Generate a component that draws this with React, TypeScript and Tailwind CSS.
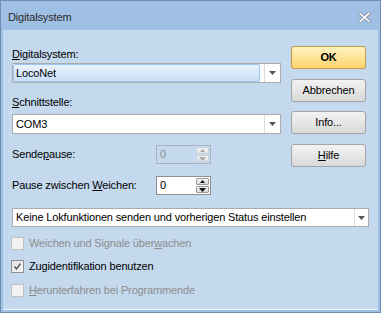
import type { ReactNode } from 'react'

const font = { fontFamily: '"Liberation Sans", Arial, sans-serif' }

function Arrow({ color = '#3c3c3c' }: { color?: string }) {
  return (
    <svg width="7" height="4" viewBox="0 0 7 4">
      <path d="M0 0h7L3.5 4z" fill={color} />
    </svg>
  )
}

function Combo({ value, highlight, w }: { value: string; highlight?: boolean; w: string }) {
  return (
    <div className={`flex h-[20px] ${w} border border-[#ababab] bg-white`}>
      <div className="flex flex-1 p-[0px]">
        {highlight ? (
          <div className="flex flex-1 items-center rounded-[2px] border border-[#9cc6f0] bg-gradient-to-b from-[#eaf3fd] to-[#c8dff9] pl-[2px] text-black">
            {value}
          </div>
        ) : (
          <div className="flex flex-1 items-center pl-[3px] text-black">{value}</div>
        )}
      </div>
      <div className="ml-[4px] w-[1px] bg-[#dcdcdc]" />
      <div className="flex w-[15px] items-center justify-center">
        <Arrow color="#555" />
      </div>
    </div>
  )
}

function Spin({ value, disabled }: { value: string; disabled?: boolean }) {
  const btn = disabled
    ? 'border-[#c9d3de] bg-gradient-to-b from-[#f4f4f4] to-[#e2e2e2]'
    : 'border-[#9a9a9a] bg-gradient-to-b from-[#f6f6f6] to-[#d6d6d6]'
  const arrow = disabled ? '#a8a8a8' : '#111'
  return (
    <div
      className={`flex h-[19px] w-[55px] border ${
        disabled ? 'border-[#aab4c0] bg-transparent text-[#8d8d8d]' : 'border-[#8e8f8f] bg-white text-black'
      }`}
    >
      <div className="flex flex-1 items-center pl-[3px]">{value}</div>
      <div className="flex w-[15px] flex-col gap-[1px] p-[1px]">
        <div className={`flex flex-1 items-center justify-center rounded-[1px] border ${btn}`}>
          <svg width="5" height="3" viewBox="0 0 5 3">
            <path d="M2.5 0L5 3H0z" fill={arrow} />
          </svg>
        </div>
        <div className={`flex flex-1 items-center justify-center rounded-[1px] border ${btn}`}>
          <Arrow color={arrow} />
        </div>
      </div>
    </div>
  )
}

function Button({ children, primary }: { children: ReactNode; primary?: boolean }) {
  return (
    <div
      className={`flex h-[23px] w-[75px] items-center justify-center rounded-[3px] border text-black ${
        primary
          ? 'border-[#c29b4a] bg-gradient-to-b from-[#fff3c0] to-[#fdd56c] font-bold'
          : 'border-[#a3a3a3] bg-gradient-to-b from-[#f3f3f3] to-[#d9d9d9]'
      }`}
    >
      {children}
    </div>
  )
}

function Check({ label, checked, disabled }: { label: ReactNode; checked?: boolean; disabled?: boolean }) {
  return (
    <div className="flex h-[23px] items-center">
      <div
        className={`ml-[-1px] flex h-[13px] w-[13px] items-center justify-center border ${
          disabled ? 'border-[#c3c3c3] bg-[#f1f1f1]' : 'border-[#8f8f8f] bg-gradient-to-br from-[#e4e4e4] to-[#f8f8f8]'
        }`}
      >
        {checked && (
          <svg width="9" height="9" viewBox="0 0 9 9">
            <path d="M1.5 4.5l2 2.5L7.5 1.5" fill="none" stroke="#5a5a5a" strokeWidth="1.5" />
          </svg>
        )}
      </div>
      <span className={`ml-[5px] ${disabled ? 'text-[#8d8d8d]' : 'text-black'}`}>{label}</span>
    </div>
  )
}

export default function App() {
  return (
    <div
      className="flex h-[313px] w-[381px] flex-col border border-[#6f8cb2] bg-[#9fbfe4] text-[11px] leading-[13px] tracking-[-0.15px]"
      style={font}
    >
      {/* Title bar */}
      <div className="flex h-[29px] shrink-0 items-center justify-between pl-[7px] pr-[9px] pt-[3px]">
        <span className="text-[11px] text-[#2b2b2b]">Digitalsystem</span>
        <svg width="13" height="11" viewBox="0 0 13 11">
          <path d="M2 1.5l9 8M11 1.5l-9 8" stroke="#8a96a6" strokeWidth="3.4" strokeLinecap="square" />
          <path d="M2 1.5l9 8M11 1.5l-9 8" stroke="#ffffff" strokeWidth="1.6" strokeLinecap="square" />
        </svg>
      </div>

      {/* Client area */}
      <div className="mx-[2px] mb-[2px] flex flex-1 flex-col border-b border-[#eef4fb] bg-[#c4d9ee] px-[9px] pt-[16px]">
        <div className="flex gap-[10px]">
          <div className="flex w-[269px] flex-col pt-[1px]">
            <div className="flex h-[14px] items-center">
              <span>
                <u>D</u>igitalsystem:
              </span>
            </div>
            <div className="mt-[2px]">
              <Combo value="LocoNet" highlight w="w-[269px]" />
            </div>
            <div className="mt-[12px] flex h-[14px] items-center">
              <span>
                <u>S</u>chnittstelle:
              </span>
            </div>
            <div className="mt-[5px]">
              <Combo value="COM3" w="w-[269px]" />
            </div>
            <div className="mt-[11px] flex items-center">
              <span className="w-[144px]">
                Sende<u>p</u>ause:
              </span>
              <Spin value="0" disabled />
            </div>
            <div className="mt-[12px] flex items-center">
              <span className="w-[144px]">
                Pause zwischen <u>W</u>eichen:
              </span>
              <Spin value="0" />
            </div>
          </div>

          <div className="flex flex-col">
            <Button primary>OK</Button>
            <div className="mt-[10px]">
              <Button>Abbrechen</Button>
            </div>
            <div className="mt-[9px]">
              <Button>Info...</Button>
            </div>
            <div className="mt-[10px]">
              <Button>
                <span>
                  <u>H</u>ilfe
                </span>
              </Button>
            </div>
          </div>
        </div>

        <div className="mt-[13px] flex h-[19px] border border-[#ababab] bg-white">
          <div className="flex flex-1 items-center pl-[3px]">Keine Lokfunktionen senden und vorherigen Status einstellen</div>
          <div className="w-[1px] bg-[#dcdcdc]" />
          <div className="flex w-[13px] items-center justify-center">
            <Arrow color="#555" />
          </div>
        </div>

        <div className="mt-[5px] flex flex-col">
          <Check
            disabled
            label={
              <>
                Weichen und Signale über<u>w</u>achen
              </>
            }
          />
          <Check checked label={<>Zugidentifikation benutzen</>} />
          <div className="mt-[1px]">
            <Check
              disabled
              label={
                <>
                  <u>H</u>erunterfahren bei Programmende
                </>
              }
            />
          </div>
        </div>
      </div>
    </div>
  )
}
